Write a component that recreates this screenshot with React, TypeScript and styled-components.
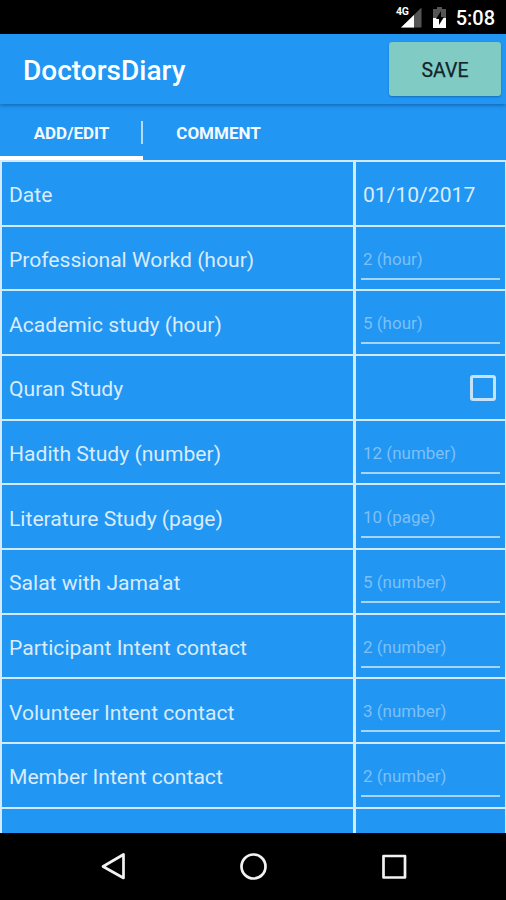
import React from 'react';
import styled, { createGlobalStyle } from 'styled-components';

const GlobalStyle = createGlobalStyle`
  * { box-sizing: border-box; }
  body { margin: 0; background: #000; font-family: Roboto, "Liberation Sans", sans-serif; }
`;

const Screen = styled.div`
  width: 506px;
  height: 900px;
  display: flex;
  flex-direction: column;
  overflow: hidden;
  background: #2196f3;
`;

const StatusBar = styled.div`
  height: 34px;
  flex: none;
  display: flex;
  align-items: center;
  justify-content: flex-end;
  padding: 2px 11px 0 0;
  background: #000;
`;

const StatusIcons = styled.svg`
  width: 56px;
  height: 26px;
  margin-right: 5px;
`;

const NetworkLabel = styled.text`
  font-size: 10.5px;
  font-weight: 700;
  fill: #fff;
`;

const Clock = styled.span`
  font-size: 20px;
  line-height: 30px;
  font-weight: 500;
  color: #fff;
`;

const AppBar = styled.header`
  height: 70px;
  flex: none;
  display: flex;
  align-items: center;
  justify-content: space-between;
  padding: 0 5px 0 23px;
  background: #2196f3;
  box-shadow: 0 1px 4px rgba(0, 40, 90, 0.5);
  z-index: 1;
`;

const Title = styled.h1`
  margin: 3px 0 0;
  font-size: 28px;
  font-weight: 500;
  color: #fff;
`;

const SaveButton = styled.button`
  width: 112px;
  height: 54px;
  padding: 2px 0 0;
  border: 0;
  border-radius: 3px;
  background: #80cbc4;
  box-shadow: 0 1px 2px rgba(0, 40, 80, 0.35);
  font: 400 19.5px Roboto, sans-serif;
  -webkit-text-stroke: 0.25px #13242a;
  color: #13242a;
`;

const Tabs = styled.nav`
  height: 57px;
  flex: none;
  display: flex;
`;

const Tab = styled.div<{ $active?: boolean; $width: number }>`
  width: ${(p) => p.$width}px;
  display: flex;
  align-items: center;
  justify-content: center;
  padding-top: ${(p) => (p.$active ? 6 : 1)}px;
  border-bottom: ${(p) => (p.$active ? '5px solid #fff' : '0')};
  font-size: 17px;
  font-weight: 700;
  color: #f4faff;
`;

const Divider = styled.div`
  width: 2px;
  height: 23px;
  margin: 17px 0 0 -2px;
  background: #b5dbfb;
`;

const Table = styled.main`
  flex: 1;
  min-height: 0;
  overflow: hidden;
  margin-top: -1px;
  padding: 2px 1px 0 2px;
  background: #d3e9fd;
`;

const Row = styled.div`
  height: 64.67px;
  display: grid;
  grid-template-columns: 351px 149px;
  column-gap: 3px;
  padding-bottom: 2px;
`;

const Cell = styled.div`
  background: #2196f3;
  display: flex;
  align-items: center;
`;

const Label = styled(Cell)`
  padding: 3px 0 0 7px;
  font-size: 21.1px;
  color: #d9ecfd;
  white-space: nowrap;
`;

const DateValue = styled(Label)``;

const CheckCell = styled(Cell)`
  justify-content: flex-end;
  padding: 1px 9px 0 0;
`;

const Checkbox = styled.div`
  width: 26px;
  height: 26px;
  border: 3px solid #c4e2fc;
  border-radius: 3px;
`;

const FieldCell = styled(Cell)`
  align-items: flex-start;
  padding: 20px 5px 0;
`;

const Field = styled.div`
  flex: 1;
  height: 33px;
  padding: 0 2px;
  border-bottom: 2px solid #a5d5fa;
  font-size: 17px;
  line-height: 24px;
  color: #7cc0f8;
  white-space: nowrap;
`;

const NavBar = styled.footer`
  height: 67px;
  flex: none;
  background: #000;
`;

const NavIcons = styled.svg`
  display: block;
  width: 506px;
  height: 67px;
  fill: none;
  stroke: #f2f2f2;
  stroke-width: 2.7;
  stroke-linejoin: round;
`;

type Entry = { label: string; hint?: string; date?: string };

const entries: Entry[] = [
  { label: 'Date', date: '01/10/2017' },
  { label: 'Professional Workd (hour)', hint: '2 (hour)' },
  { label: 'Academic study (hour)', hint: '5 (hour)' },
  { label: 'Quran Study' },
  { label: 'Hadith Study (number)', hint: '12 (number)' },
  { label: 'Literature Study (page)', hint: '10 (page)' },
  { label: "Salat with Jama'at", hint: '5 (number)' },
  { label: 'Participant Intent contact', hint: '2 (number)' },
  { label: 'Volunteer Intent contact', hint: '3 (number)' },
  { label: 'Member Intent contact', hint: '2 (number)' },
];

function EntryValue({ entry }: { entry: Entry }) {
  if (entry.date) return <DateValue>{entry.date}</DateValue>;
  if (entry.hint) return <FieldCell><Field>{entry.hint}</Field></FieldCell>;
  return <CheckCell><Checkbox role="checkbox" aria-checked={false} /></CheckCell>;
}

export default function App() {
  return (
    <Screen>
      <GlobalStyle />
      <StatusBar>
        <StatusIcons viewBox="0 0 56 26">
          <path d="M26.500 2.500V22.500H6Z" fill="#555" />
          <path d="M19 10V22.500H6Z" fill="#fff" />
          <path d="M0 0H14.5V12.5H0Z" fill="#000" />
          <NetworkLabel x="1" y="10" textLength="13">4G</NetworkLabel>
          <path d="M42 2h5v2h4v19H38V4h4Z" fill="#555" />
          <path d="M38 13h13v10H38Z" fill="#fff" />
          <path d="M46 6l-5 8h3v6l5-8h-3Z" fill="#000" />
        </StatusIcons>
        <Clock>5:08</Clock>
      </StatusBar>
      <AppBar>
        <Title>DoctorsDiary</Title>
        <SaveButton>SAVE</SaveButton>
      </AppBar>
      <Tabs>
        <Tab $active $width={143}>ADD/EDIT</Tab>
        <Divider />
        <Tab $width={151}>COMMENT</Tab>
      </Tabs>
      <Table>
        {entries.map((entry) => (
          <Row key={entry.label}>
            <Label>{entry.label}</Label>
            <EntryValue entry={entry} />
          </Row>
        ))}
        <Row>
          <Cell />
          <Cell />
        </Row>
      </Table>
      <NavBar>
        <NavIcons viewBox="0 0 506 67">
          <path d="M123.5 21.5V45L103 33.5Z" />
          <circle cx="253.5" cy="33.5" r="12" />
          <rect x="383.5" y="23" width="21.5" height="21.5" />
        </NavIcons>
      </NavBar>
    </Screen>
  );
}
